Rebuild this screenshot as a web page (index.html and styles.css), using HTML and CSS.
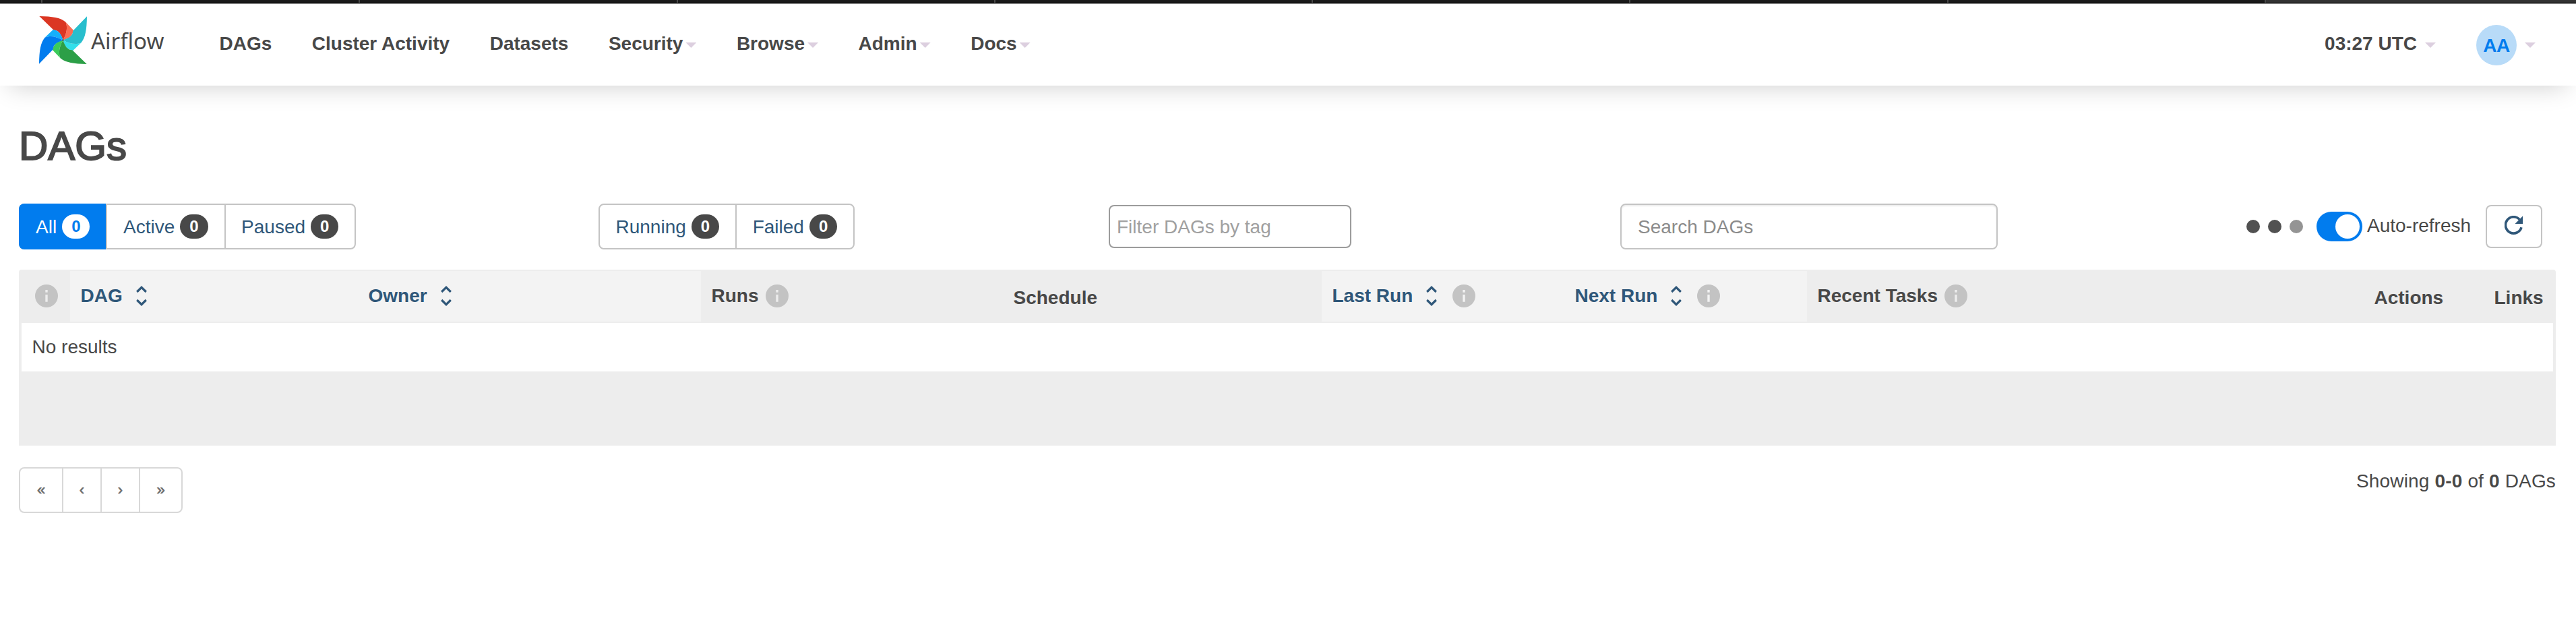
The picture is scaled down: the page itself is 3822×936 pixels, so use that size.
FILE: index.html
```html
<!DOCTYPE html>
<html lang="en">
<head>
<meta charset="utf-8">
<title>DAGs - Airflow</title>
<link rel="stylesheet" href="styles.css">
</head>
<body>
<svg class="defs" width="0" height="0" aria-hidden="true">
  <symbol id="info" viewBox="0 0 24 24"><path fill="#c3c3c3" d="M12 0a12 12 0 1 0 0 24a12 12 0 0 0 0-24zM10.8 5.6h2.4v2.7h-2.4zM10.8 10.6h2.4v7.6h-2.4z" fill-rule="evenodd"/></symbol>
  <symbol id="sort" viewBox="0 0 16 30"><path fill="none" stroke="#2f5779" stroke-width="3.2" d="M1.2 9L8 2.3L14.8 9M1.2 21L8 27.7L14.8 21"/></symbol>
  <symbol id="blade" viewBox="56 43 212 212"><path d="M57 43C115 44 150 49 174 69C183 92 179 119 162 149C153 123 143 105 121 105z"/></symbol>
  <symbol id="fold" viewBox="56 43 212 212"><path d="M174 69L208 105C205 130 188 142 162 149C179 119 183 92 174 69z"/></symbol>
</svg>
<div class="tabstrip"><i></i><i></i><i></i><i></i><i></i><i></i><i></i><i class="last"></i></div>
<header class="header">
  <a class="brand">
    <svg class="pinwheel" viewBox="0 0 212 212">
      <g><use href="#fold" width="212" height="212" fill="#fb6e54"/><use href="#blade" width="212" height="212" fill="#db3623"/></g>
      <g transform="rotate(90 106 106)"><use href="#fold" width="212" height="212" fill="#32dfeb"/><use href="#blade" width="212" height="212" fill="#28becd"/></g>
      <g transform="rotate(180 106 106)"><use href="#fold" width="212" height="212" fill="#3bcb5a"/><use href="#blade" width="212" height="212" fill="#2c9f47"/></g>
      <g transform="rotate(270 106 106)"><use href="#fold" width="212" height="212" fill="#16b0fb"/><use href="#blade" width="212" height="212" fill="#017cee"/></g>
      <circle cx="106" cy="106" r="3.5" fill="#51504f"/>
    </svg>
    <span class="brand-name">Airflow</span>
  </a>
  <nav class="nav">
    <a>DAGs</a><a>Cluster Activity</a><a>Datasets</a>
    <a>Security<i class="caret"></i></a><a>Browse<i class="caret"></i></a><a>Admin<i class="caret"></i></a><a>Docs<i class="caret"></i></a>
  </nav>
  <div class="user">
    <span class="clock">03:27 UTC</span><i class="caret"></i>
    <span class="avatar">AA</span><i class="caret"></i>
  </div>
</header>
<main class="main">
  <h1 class="title">DAGs</h1>
  <div class="filters">
    <div class="group status">
      <a class="btn on">All<b class="badge">0</b></a><a class="btn">Active<b class="badge">0</b></a><a class="btn">Paused<b class="badge">0</b></a>
    </div>
    <div class="group runs">
      <a class="btn">Running<b class="badge">0</b></a><a class="btn">Failed<b class="badge">0</b></a>
    </div>
    <div class="field tag">Filter DAGs by tag</div>
    <div class="field search">Search DAGs</div>
    <div class="refresh">
      <span class="dots"><i></i><i></i><i class="dim"></i></span>
      <span class="toggle"><i></i></span>
      <span class="label">Auto-refresh</span>
      <span class="reload"><svg viewBox="0 0 28 28"><path fill="none" stroke="#2f5779" stroke-width="3.6" d="M22.2 5.5A12 12.2 0 1 0 25 17.2"/><path fill="#2f5779" d="M27 .5V12H15.5z"/></svg></span>
    </div>
  </div>
  <section class="table">
    <div class="thead">
      <div class="th first"><svg class="info"><use href="#info"/></svg></div>
      <div class="th link">DAG<svg class="sort"><use href="#sort"/></svg></div>
      <div class="th link">Owner<svg class="sort"><use href="#sort"/></svg></div>
      <div class="th">Runs<svg class="info"><use href="#info"/></svg></div>
      <div class="th low">Schedule</div>
      <div class="th link">Last Run<svg class="sort"><use href="#sort"/></svg><svg class="info far"><use href="#info"/></svg></div>
      <div class="th link">Next Run<svg class="sort"><use href="#sort"/></svg><svg class="info far"><use href="#info"/></svg></div>
      <div class="th">Recent Tasks<svg class="info"><use href="#info"/></svg></div>
      <div class="th low">Actions</div>
      <div class="th low">Links</div>
    </div>
    <div class="empty">No results</div>
    <div class="tfoot"></div>
  </section>
  <div class="bottom">
    <div class="pager"><a class="wide">«</a><a>‹</a><a>›</a><a class="wide">»</a></div>
    <p class="count">Showing <b>0-0</b> of <b>0</b> DAGs</p>
  </div>
</main>
</body>
</html>
```
FILE: styles.css
```css
* { box-sizing: border-box; }
body { margin: 0; background: #fff; color: #484848; font: 28px/40px "Liberation Sans", Arial, sans-serif; min-height: 936px; }
.defs { display: block; }
.tabstrip { display: flex; height: 6px; padding-left: 61px; background: linear-gradient(#1a1a1a 4px, #000 4px, #000 5px, #a9a9a9 5px); }
.tabstrip i { flex: none; width: 471.3px; height: 4px; border-left: 2px solid #4b4b4b; }
.tabstrip .last { flex: 1; background: #333; }
.header { display: flex; height: 121px; padding: 0 60px 0 58px; background: #fff; box-shadow: 0 16px 36px -14px rgba(0,0,0,.19); }
.brand { display: flex; width: 238px; padding-top: 18px; }
.pinwheel { flex: none; width: 71px; height: 71px; }
.brand-name { margin: 17px 0 0 6px; font: 33px/40px "Noto Sans", sans-serif; }
.nav { display: flex; font-weight: bold; }
.nav a { display: flex; padding: 39px 30px 0 29.5px; white-space: nowrap; }
.caret { flex: none; width: 16px; height: 8px; margin: 18px 0 0 4px; background: #dccfdf; clip-path: polygon(0 0, 100% 0, 50% 100%); }
.user { display: flex; margin-left: auto; padding-top: 39px; font-weight: bold; }
.user .caret { margin-left: 12px; }
.avatar { width: 60px; height: 60px; margin: -8px 0 0 60px; border-radius: 50%; background: #b8dbf8; color: #017cee; line-height: 60px; padding-top: 1px; text-align: center; letter-spacing: -.5px; }
.main { padding: 0 30px 0 28px; }
.title { margin: 0; padding: 57px 0 0; height: 175px; font-size: 60px; line-height: 66px; font-weight: normal; -webkit-text-stroke: 2px #484848; }
.filters { display: grid; grid-template-columns: 860px 757px 759px 929px 1fr; height: 98px; align-items: start; }
.group { display: flex; width: max-content; height: 68px; border: 2px solid #c4c4c4; border-radius: 8px; }
.btn { display: flex; align-items: center; height: 64px; padding: 1px 24px 0 23.5px; color: #2f5779; }
.btn + .btn { border-left: 2px solid #c4c4c4; }
.btn.on { margin: -2px 0 -2px -2px; height: 68px; padding: 1px 24px 0 25px; border-radius: 8px 0 0 8px; background: #017cee; color: #fff; }
.badge { display: block; height: 36px; margin: -1px 0 0 8px; padding: 0 14px; border-radius: 18px; background: #484848; color: #fff; font-size: 24px; line-height: 36px; }
.on .badge { background: #fff; color: #017cee; }
.field { border: 2px solid #c4c4c4; border-radius: 8px; }
.tag { width: 360px; height: 64px; margin-top: 2px; padding-left: 10px; line-height: 62px; border-color: #9c9c9c; color: #a0a0a0; }
.search { width: 560px; height: 68px; padding-left: 24px; line-height: 66px; color: #8b8b8b; box-shadow: inset 0 2px 2px rgba(0,0,0,.075); }
.refresh { display: flex; align-items: center; height: 68px; }
.dots { display: flex; flex: none; gap: 12px; width: 104px; }
.dots i { width: 20px; height: 20px; border-radius: 50%; background: #515151; }
.dots .dim { background: #949494; }
.toggle { flex: none; width: 68px; height: 44px; padding: 4px 4px 4px 28px; border-radius: 22px; background: #017cee; }
.toggle i { display: block; width: 36px; height: 36px; border-radius: 50%; background: #fff; }
.label { flex: none; width: 176px; margin: -3px 0 0 7px; white-space: nowrap; }
.reload { flex: none; width: 84px; height: 64px; border: 2px solid #c4c4c4; border-radius: 8px; padding: 14px 0 0 26px; }
.reload svg { display: block; width: 28px; height: 28px; }
.table { background: #ededed; border-radius: 4px 4px 0 0; }
.thead { display: grid; grid-template-columns: 76px 427px 509px 448px 473px 360px 360px 826px 178px 1fr; height: 79px; padding: 2px 0; font-weight: bold; }
.th { display: flex; padding: 17px 0 0 15.5px; white-space: nowrap; }
.th.low { padding-top: 20px; }
.th.link { background: #f3f3f3; color: #2f5779; }
.info { width: 34px; height: 34px; margin: 3px 0 0 10px; }
.first .info { margin-left: 8px; }
.info.far { margin-left: 22.5px; }
.sort { width: 16px; height: 30px; margin: 5px 0 0 20px; }
.empty { height: 72px; margin: 0 4px; padding: 16px 0 0 15.5px; background: #fff; }
.tfoot { height: 110px; }
.bottom { display: flex; justify-content: space-between; padding-top: 32px; }
.pager { display: flex; height: 68px; border: 2px solid #d8d8d8; border-radius: 8px; }
.pager a { width: 57px; line-height: 64px; font-size: 22px; text-align: center; color: #6b6b6b; -webkit-text-stroke: .6px #6b6b6b; }
.pager .wide { width: 62px; }
.pager a + a { border-left: 2px solid #d8d8d8; }
.pager a + .wide { width: 63px; }
.count { margin: 1px 0 0; letter-spacing: .16px; }
```
